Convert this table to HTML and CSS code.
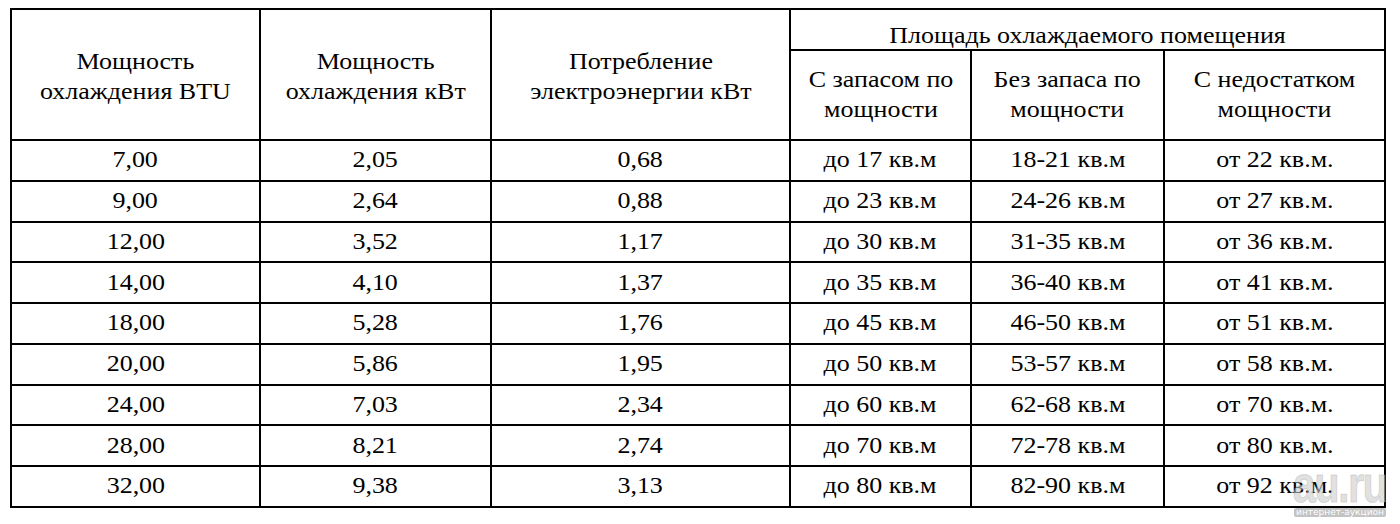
FILE: index.html
```html
<!DOCTYPE html>
<html lang="ru">
<head>
<meta charset="utf-8">
<title>Таблица мощности кондиционеров</title>
<link rel="stylesheet" href="styles.css">
</head>
<body>
<div class="page">
  <table class="spec">
    <colgroup>
      <col class="c1"><col class="c2"><col class="c3"><col class="c4"><col class="c5"><col class="c6">
    </colgroup>
    <thead>
      <tr class="h1">
        <th rowspan="2" class="tall"><span class="t">Мощность<br>охлаждения BTU</span></th>
        <th rowspan="2" class="tall"><span class="t">Мощность<br>охлаждения кВт</span></th>
        <th rowspan="2" class="tall"><span class="t">Потребление<br>электроэнергии кВт</span></th>
        <th colspan="3" class="group"><span class="t">Площадь охлаждаемого помещения</span></th>
      </tr>
      <tr class="h2">
        <th><span class="t">С запасом по<br>мощности</span></th>
        <th><span class="t">Без запаса по<br>мощности</span></th>
        <th><span class="t">С недостатком<br>мощности</span></th>
      </tr>
    </thead>
    <tbody>
      <tr><td><span class="t">7,00</span></td><td><span class="t">2,05</span></td><td><span class="t">0,68</span></td><td><span class="t">до 17 кв.м</span></td><td><span class="t">18-21 кв.м</span></td><td><span class="t">от 22 кв.м.</span></td></tr>
      <tr><td><span class="t">9,00</span></td><td><span class="t">2,64</span></td><td><span class="t">0,88</span></td><td><span class="t">до 23 кв.м</span></td><td><span class="t">24-26 кв.м</span></td><td><span class="t">от 27 кв.м.</span></td></tr>
      <tr><td><span class="t">12,00</span></td><td><span class="t">3,52</span></td><td><span class="t">1,17</span></td><td><span class="t">до 30 кв.м</span></td><td><span class="t">31-35 кв.м</span></td><td><span class="t">от 36 кв.м.</span></td></tr>
      <tr><td><span class="t">14,00</span></td><td><span class="t">4,10</span></td><td><span class="t">1,37</span></td><td><span class="t">до 35 кв.м</span></td><td><span class="t">36-40 кв.м</span></td><td><span class="t">от 41 кв.м.</span></td></tr>
      <tr><td><span class="t">18,00</span></td><td><span class="t">5,28</span></td><td><span class="t">1,76</span></td><td><span class="t">до 45 кв.м</span></td><td><span class="t">46-50 кв.м</span></td><td><span class="t">от 51 кв.м.</span></td></tr>
      <tr><td><span class="t">20,00</span></td><td><span class="t">5,86</span></td><td><span class="t">1,95</span></td><td><span class="t">до 50 кв.м</span></td><td><span class="t">53-57 кв.м</span></td><td><span class="t">от 58 кв.м.</span></td></tr>
      <tr><td><span class="t">24,00</span></td><td><span class="t">7,03</span></td><td><span class="t">2,34</span></td><td><span class="t">до 60 кв.м</span></td><td><span class="t">62-68 кв.м</span></td><td><span class="t">от 70 кв.м.</span></td></tr>
      <tr><td><span class="t">28,00</span></td><td><span class="t">8,21</span></td><td><span class="t">2,74</span></td><td><span class="t">до 70 кв.м</span></td><td><span class="t">72-78 кв.м</span></td><td><span class="t">от 80 кв.м.</span></td></tr>
      <tr><td><span class="t">32,00</span></td><td><span class="t">9,38</span></td><td><span class="t">3,13</span></td><td><span class="t">до 80 кв.м</span></td><td><span class="t">82-90 кв.м</span></td><td><span class="t">от 92 кв.м.</span></td></tr>
    </tbody>
  </table>
  <div class="watermark">
    <span class="wm-logo">au.ru</span>
    <span class="wm-sub">интернет-аукцион</span>
  </div>
</div>
</body>
</html>
```

FILE: styles.css
```css
html, body {
  margin: 0;
  padding: 0;
  background: #ffffff;
}
.page {
  position: relative;
  width: 1400px;
  height: 524px;
  padding: 8px 0 0 10px;
  box-sizing: border-box;
  overflow: hidden;
}
.spec {
  border-collapse: collapse;
  table-layout: fixed;
  width: 1374px;
  font-family: "Liberation Serif", "Times New Roman", serif;
  font-size: 23px;
  color: #000;
}
.c1 { width: 249px; }
.c2 { width: 231px; }
.c3 { width: 299px; }
.c4 { width: 181px; }
.c5 { width: 193px; }
.c6 { width: 221px; }
.spec th, .spec td {
  border: 2px solid #000;
  text-align: center;
  vertical-align: middle;
  padding: 0;
  font-weight: normal;
  line-height: 30px;
}
.t {
  display: inline-block;
  transform: scaleX(1.13);
  transform-origin: center;
  white-space: nowrap;
}
.spec th.tall { padding-top: 4px; }
.spec th.group {
  vertical-align: bottom;
  line-height: 26px;
}
.h1 { height: 41px; }
.h2 { height: 90px; }
.spec tbody tr { height: 40.75px; }
.watermark {
  position: absolute;
  left: 1290px;
  top: 467px;
  width: 100px;
  display: flex;
  flex-direction: column;
  align-items: center;
}
.wm-logo {
  display: block;
  font-family: "Liberation Sans", "DejaVu Sans", sans-serif;
  font-weight: bold;
  font-size: 52px;
  line-height: 34px;
  letter-spacing: -2px;
  transform: scaleX(0.8);
  color: rgba(205, 205, 205, 0.6);
  -webkit-text-stroke: 1px rgba(160, 160, 160, 0.35);
}
.wm-sub {
  display: block;
  margin-top: 7px;
  font-family: "DejaVu Sans", sans-serif;
  font-size: 9px;
  line-height: 9px;
  padding: 0 2px;
  color: #fff;
  background: rgba(185, 185, 185, 0.85);
  border-radius: 2px;
  white-space: nowrap;
}
```
